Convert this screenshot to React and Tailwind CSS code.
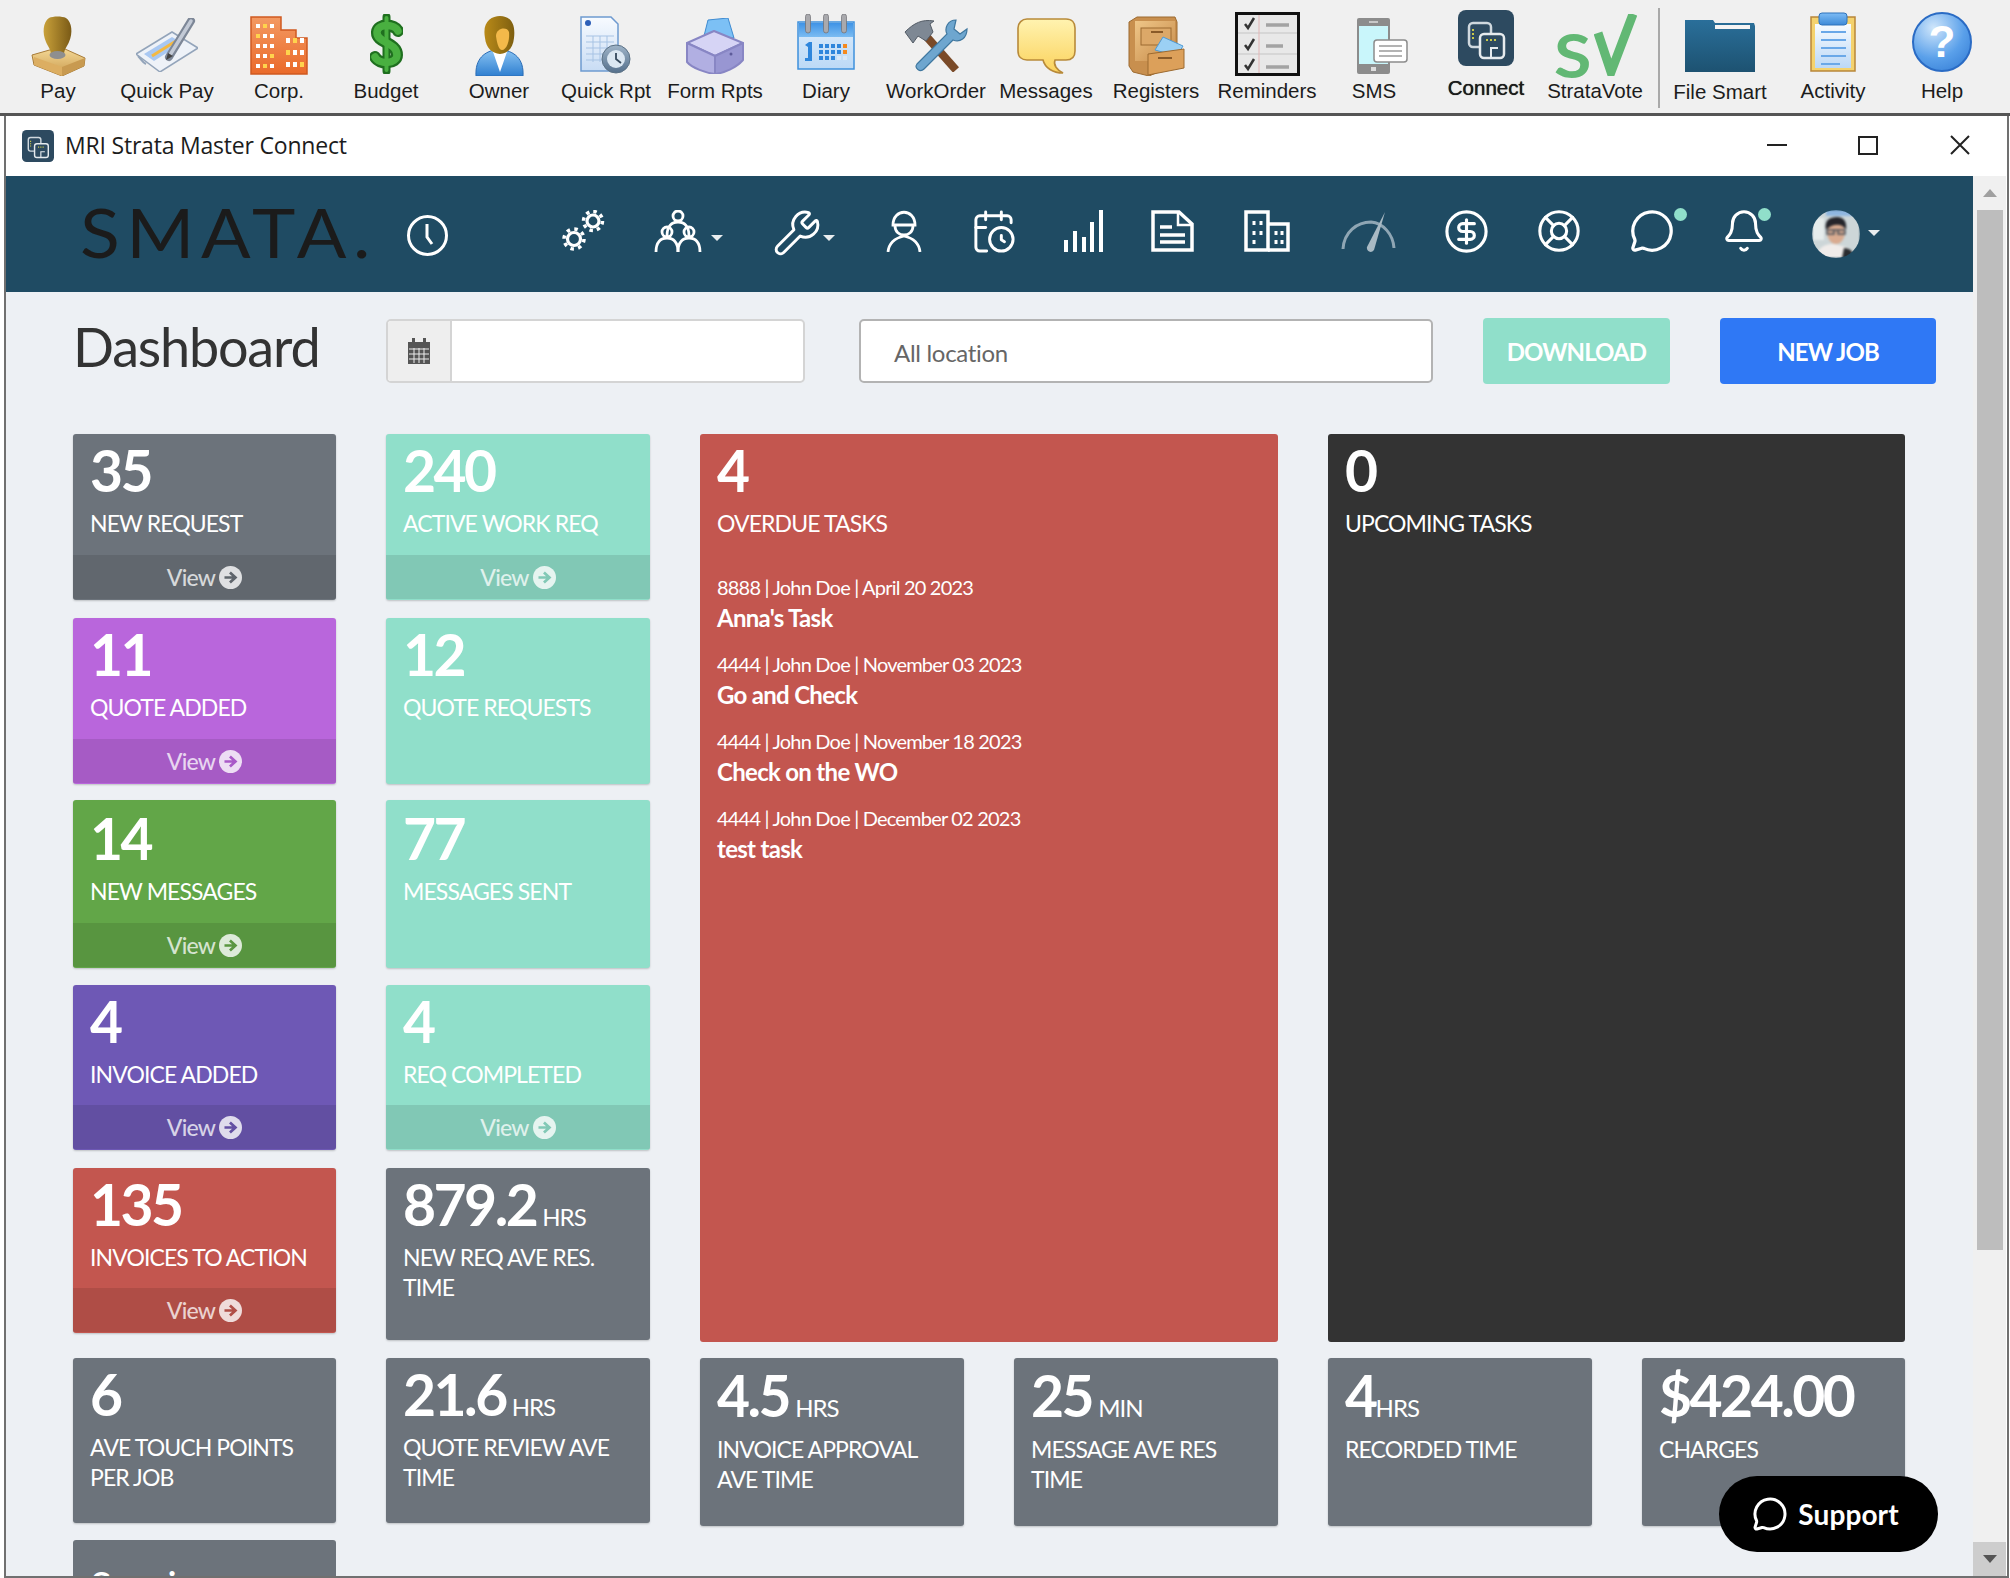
import React from 'react';
import { Wrench, CalendarClock, CircleDollarSign, LifeBuoy, MessageCircle, Bell } from 'lucide-react';

const G = ({ id, a, b, x2 = 0, y2 = 1 }) => (
  <linearGradient id={id} x1="0" y1="0" x2={x2} y2={y2}>
    <stop offset="0" stopColor={a} />
    <stop offset="1" stopColor={b} />
  </linearGradient>
);

const PayIcon = () => (
  <svg width="55" height="60" viewBox="0 0 55 60">
    <defs><G id="p1" a="#c9a13a" b="#7a5a16" x2={1} y2={0} /><G id="p2" a="#f3d795" b="#c99a4c" /></defs>
    <path d="M1 39 L22 33 L34 33 L54 42 L53 50 L31 60 L3 49Z" fill="url(#p2)" stroke="#a87c38" />
    <path d="M3 41 L31 51 L31 60 L3 49Z" fill="#dcae62" />
    <path d="M31 51 L54 42 L53 50 L31 60Z" fill="#c89a50" />
    <path d="M18 2 C12 6 11 17 15 26 C17 31 20 33 20 39 L33 39 C33 33 36 31 38 26 C42 17 41 6 35 2 C31 0 22 0 18 2Z" fill="url(#p1)" />
    <ellipse cx="26.500" cy="39" rx="8" ry="4" fill="#8f8f8f" />
  </svg>
);
const QuickPayIcon = () => (
  <svg width="62" height="54" viewBox="0 0 62 54">
    <path d="M0 36 L36 14 L62 30 L24 54Z" fill="#eef2f8" stroke="#93a4ba" strokeWidth="1.500" />
    <path d="M8 36 L36 19 L46 25 L18 43Z" fill="#a9c8f2" />
    <path d="M16 38 L40 23" stroke="#f4b942" strokeWidth="3" />
    <path d="M2 38 C6 42 6 44 10 46" stroke="#93a4ba" strokeWidth="2" fill="none" />
    <path d="M55 3 L33 39" stroke="#7d8797" strokeWidth="8" strokeLinecap="round" />
    <path d="M55 3 L34 37" stroke="#c3cad6" strokeWidth="3.500" strokeLinecap="round" />
    <path d="M30 42 L32 35 L37 38Z" fill="#444" />
  </svg>
);
const CorpIcon = () => {
  const w = [];
  [8, 18, 28, 38, 48].forEach((y, r) => [6, 13, 20].forEach((x, c) => w.push(<rect key={`a${r}${c}`} x={x} y={y} width="4" height="4" fill={(r + c) % 4 === 1 ? '#ffd34d' : '#fff'} />)));
  [22, 34, 46].forEach((y, r) => [36, 43, 50].forEach((x, c) => w.push(<rect key={`b${r}${c}`} x={x} y={y} width="4" height="5" fill={(r + c) % 3 === 1 ? '#ffd34d' : '#fff'} />)));
  return (
    <svg width="58" height="59" viewBox="0 0 58 59">
      <defs><G id="c1" a="#f39a63" b="#ea6a2a" /></defs>
      <path d="M1 1 H31 V14 H46 V22 H57 V58 H1Z" fill="url(#c1)" stroke="#cf5a20" strokeWidth="1.500" />
      {w}
    </svg>
  );
};
const BudgetIcon = () => {
  const d = 'M28 17 C25 10 8 9 7 18 C6 29 27 28 27 41 C27 50 9 51 5 43';
  return (
    <svg width="33" height="60" viewBox="0 0 33 60">
      <path d="M16.500 3 V57" stroke="#1f6f1f" strokeWidth="8" strokeLinecap="round" />
      <path d={d} fill="none" stroke="#1f6f1f" strokeWidth="12" strokeLinecap="round" />
      <path d="M16.500 4 V56" stroke="#49b040" strokeWidth="4" strokeLinecap="round" />
      <path d={d} fill="none" stroke="#49b040" strokeWidth="7.500" strokeLinecap="round" />
    </svg>
  );
};
const OwnerIcon = () => (
  <svg width="49" height="60" viewBox="0 0 49 60">
    <defs><G id="o1" a="#8cc6f4" b="#2f7fd0" /><G id="o2" a="#b98a18" b="#7e5f10" x2={1} y2={0} /></defs>
    <path d="M1 60 C0 43 9 35 24 33 C40 35 49 43 48 60Z" fill="url(#o1)" stroke="#2a6cb5" />
    <path d="M17 33 L25 56 L33 33Z" fill="#fff" />
    <path d="M10 22 C7 6 16 0 25 0 C34 0 41 6 39 22 C38 32 33 37 25 38 C17 37 11 32 10 22Z" fill="url(#o2)" />
    <path d="M21 20 C21 12 32 10 34 16 C35 26 31 34 27 34 C24 34 22 28 21 20Z" fill="#f3b94a" />
  </svg>
);
const QuickRptIcon = () => (
  <svg width="52" height="58" viewBox="0 0 52 58">
    <defs><G id="q1" a="#f8fbff" b="#c8dcf4" /><G id="q2" a="#9fb4c8" b="#55708c" /></defs>
    <path d="M1 1 H31 L38 8 V55 H1Z" fill="url(#q1)" stroke="#6e9ad0" strokeWidth="1.500" />
    <circle cx="8" cy="7" r="3" fill="#2d5fb8" />
    <path d="M6 20 H34 M6 26 H34 M6 32 H34 M6 38 H34 M6 44 H28 M13 20 V46 M20 20 V46 M27 20 V46" stroke="#a7c3e4" strokeWidth="1" />
    <circle cx="36" cy="43" r="14" fill="url(#q2)" stroke="#5c7286" />
    <circle cx="36" cy="43" r="9" fill="#dbe7f2" />
    <path d="M36 37 V43 L41 47" stroke="#35495c" strokeWidth="1.800" fill="none" />
  </svg>
);
const FormRptsIcon = () => (
  <svg width="62" height="56" viewBox="0 0 62 56" strokeLinejoin="round">
    <path d="M20 18 L24 2 L44 0 L50 20Z" fill="#7cc0f5" stroke="#3f8bd0" />
    <path d="M3 25 L30 13 L59 25 L31 38Z" fill="#d6d4f5" stroke="#8886c4" strokeWidth="2" />
    <path d="M3 25 L31 38 V56 C22 55 8 50 3 44Z" fill="#b1afe2" stroke="#8886c4" strokeWidth="2" />
    <path d="M31 38 L59 25 V42 C52 50 40 55 31 56Z" fill="#9896d2" stroke="#8886c4" strokeWidth="2" />
    <circle cx="47" cy="36" r="1.500" fill="#5d5b9a" />
  </svg>
);
const DiaryIcon = () => (
  <svg width="58" height="56" viewBox="0 0 58 56">
    <defs><G id="d1" a="#dcecfb" b="#bcd9f6" /><G id="d2" a="#3f93e6" b="#7bbcf2" /></defs>
    <rect x="1" y="8" width="56" height="47" fill="url(#d1)" stroke="#3e90dc" strokeWidth="1.500" />
    <rect x="2" y="9" width="54" height="14" fill="url(#d2)" />
    {[11, 29, 47].map((x) => <rect key={x} x={x - 2.500} y="0" width="5" height="19" rx="2.500" fill="#a9a9ad" stroke="#6e6e72" strokeWidth=".700" />)}
    <path d="M8 31 L12 28 H15 V47 H8 V44 H11 V33Z" fill="#2f86dc" />
    {[30, 36, 42].map((y) => [22, 28, 34, 40, 46].map((x) => <rect key={`${x}${y}`} x={x} y={y} width="4" height="4" fill={x === 46 && y < 42 ? '#f58a1f' : y === 42 && x > 34 ? '#d9e8f8' : '#2f86dc'} />))}
  </svg>
);
const WorkOrderIcon = () => (
  <svg width="64" height="54" viewBox="0 0 64 54">
    <path d="M22 18 L52 52" stroke="#7a4a28" strokeWidth="8" />
    <path d="M1 14 C10 5 18 1 30 3 L26 6 L29 14 L22 23 L14 18 L9 25Z" fill="#7e8894" stroke="#545c66" />
    <path d="M52 2 C44 2 40 10 43 16 L13 46 C10 50 16 55 20 51 L49 22 C56 25 63 20 63 11 L56 16 L50 11Z" fill="#6ea6cf" stroke="#3f779f" strokeWidth="1.200" />
  </svg>
);
const MessagesIcon = () => (
  <svg width="59" height="56" viewBox="0 0 59 56">
    <defs><G id="m1" a="#fff3b0" b="#fbd25c" /></defs>
    <path d="M10 1 H49 C55 1 58 5 58 10 V33 C58 40 54 42 49 42 H38 C36 47 40 52 46 55 C36 55 28 50 26 42 H10 C5 42 1 39 1 33 V10 C1 5 5 1 10 1Z" fill="url(#m1)" stroke="#b88a3a" strokeWidth="1.600" />
  </svg>
);
const RegistersIcon = () => (
  <svg width="58" height="60" viewBox="0 0 58 60">
    <defs><G id="r1" a="#efc688" b="#c68a48" x2={1} y2={1} /></defs>
    <path d="M2 6 L10 1 L48 1 L50 6 V48 L22 60 L6 56 L2 50Z" fill="#c88f4e" stroke="#9c6a30" />
    <rect x="8" y="5" width="40" height="40" fill="url(#r1)" />
    <rect x="14" y="12" width="30" height="17" fill="#dca868" stroke="#9c6a30" />
    <path d="M24 16 H36" stroke="#8a5a28" strokeWidth="2" />
    <path d="M28 34 L36 21 L56 30 L50 40Z" fill="#9bd0f4" stroke="#4f9ad4" />
    <path d="M21 38 L57 33 V52 L21 59Z" fill="#dca05a" stroke="#9c6a30" />
    <path d="M31 42 H45" stroke="#8a5a28" strokeWidth="2" />
  </svg>
);
const RemindersIcon = () => (
  <svg width="65" height="64" viewBox="0 0 65 64">
    <rect x="1.500" y="1.500" width="62" height="61" fill="#e8e8e8" stroke="#111" strokeWidth="3" />
    <path d="M3 21 H62 M3 42 H62" stroke="#cfcfcf" strokeWidth="1.500" />
    <path d="M24 3 V61" stroke="#e2b6b6" strokeWidth="1" />
    {[12, 33, 53].map((y) => <path key={y} d={`M10 ${y} L13 ${y + 4} L19 ${y - 6}`} stroke="#333" strokeWidth="2.500" fill="none" />)}
    <path d="M31 13 H54 M31 34 H48 M31 55 H54" stroke="#a3a3a3" strokeWidth="3.500" />
  </svg>
);
const SmsIcon = () => (
  <svg width="51" height="56" viewBox="0 0 51 56">
    <rect x="0" y="0" width="33" height="56" rx="2" fill="#8c8c8c" />
    <rect x="2" y="8" width="29" height="38" fill="#c9f6fb" />
    <path d="M12 4 H21" stroke="#ddd" strokeWidth="1.500" />
    <rect x="14" y="49" width="5" height="4" fill="#ddd" />
    <rect x="17" y="22" width="33" height="22" rx="3" fill="#fff" stroke="#8c8c8c" strokeWidth="1.500" />
    <path d="M22 28 H45 M22 33 H45 M22 38 H45" stroke="#9a9a9a" strokeWidth="1.500" />
  </svg>
);
const ConnectIcon = ({ s = 56 }) => (
  <svg width={s} height={s} viewBox="0 0 56 56">
    <rect width="56" height="56" rx="8" fill="#2d4a60" />
    <rect x="11" y="13" width="22" height="24" rx="4" fill="none" stroke="#cfd8de" strokeWidth="2.500" />
    <rect x="22" y="24" width="24" height="24" rx="4" fill="#2d4a60" stroke="#e6ebee" strokeWidth="2.500" />
    <path d="M15 19 V30" stroke="#c9c84a" strokeWidth="2" strokeDasharray="2 2" />
    <path d="M28 30 H40" stroke="#c9c84a" strokeWidth="2" strokeDasharray="2 2" />
    <path d="M33 48 V38 H40" stroke="#e6ebee" strokeWidth="2" fill="none" />
  </svg>
);
const FolderIcon = () => (
  <svg width="70" height="52" viewBox="0 0 70 52">
    <defs><G id="fo" a="#2a6f9a" b="#1d5271" /></defs>
    <path d="M0 0 H28 L30 3 H69 L70 6 V52 H0Z" fill="url(#fo)" />
    <rect x="30" y="5" width="35" height="4" fill="#f4f4f4" />
  </svg>
);
const ActivityIcon = () => (
  <svg width="46" height="60" viewBox="0 0 46 60">
    <defs><G id="a1" a="#f7fbff" b="#bcd8f6" /><G id="a2" a="#7dbcf5" b="#3d8ad8" /></defs>
    <rect x="1" y="5" width="44" height="54" fill="#f4d26e" stroke="#b8863a" strokeWidth="1.500" />
    <rect x="5" y="12" width="36" height="44" fill="url(#a1)" />
    <rect x="9" y="1" width="28" height="12" rx="3" fill="url(#a2)" stroke="#2f73bb" />
    <path d="M11 20 H36 M11 28 H36 M11 36 H36 M11 44 H36 M11 52 H30" stroke="#6aa8e8" strokeWidth="1.800" />
  </svg>
);

const HelpIcon = () => (
  <div className="w-[60px] h-[60px] rounded-full border-2 border-[#2a6bc4] bg-[radial-gradient(circle_at_35%_25%,#cfe6fb,#5aa0ea_55%,#2f78d2)] flex items-center justify-center text-white font-bold text-[44px] leading-none font-['Liberation_Sans',sans-serif]">?</div>
);

const SvLogo = () => (
  <div className="w-[83px] h-[62px] flex items-end text-[#62b874]">
    <div className="w-[40px] h-[44px] leading-[44px] text-[62px] font-bold font-['Lato',sans-serif] scale-x-[1.1] origin-left overflow-visible">S</div>
    <svg width="43" height="62" viewBox="0 0 43 62" fill="none" stroke="#62b874" strokeWidth="9"><path d="M4 19 L17 58 L39 0" /></svg>
  </div>
);

const tools = [
  { n: 'Pay', w: 'w-[116px]', m: 'mt-[16px]', I: PayIcon },
  { n: 'Quick Pay', w: 'w-[102px]', m: 'mt-[18px]', I: QuickPayIcon },
  { n: 'Corp.', w: 'w-[122px]', m: 'mt-[16px]', I: CorpIcon },
  { n: 'Budget', w: 'w-[92px]', m: 'mt-[14px]', I: BudgetIcon },
  { n: 'Owner', w: 'w-[134px]', m: 'mt-[16px]', I: OwnerIcon },
  { n: 'Quick Rpt', w: 'w-[80px]', m: 'mt-[16px]', I: QuickRptIcon },
  { n: 'Form Rpts', w: 'w-[138px]', m: 'mt-[18px]', I: FormRptsIcon },
  { n: 'Diary', w: 'w-[84px]', m: 'mt-[14px]', I: DiaryIcon },
  { n: 'WorkOrder', w: 'w-[136px]', m: 'mt-[18px]', I: WorkOrderIcon },
  { n: 'Messages', w: 'w-[84px]', m: 'mt-[18px]', I: MessagesIcon },
  { n: 'Registers', w: 'w-[136px]', m: 'mt-[16px]', I: RegistersIcon },
  { n: 'Reminders', w: 'w-[86px]', m: 'mt-[12px]', I: RemindersIcon },
  { n: 'SMS', w: 'w-[128px]', m: 'mt-[18px] ml-[16px]', I: SmsIcon },
  { n: 'Connect', w: 'w-[96px]', m: 'mt-[10px]', I: ConnectIcon, l: '-mt-[3px] [text-shadow:0_0_0.7px_#000]' },
  { n: 'StrataVote', w: 'w-[122px]', m: 'mt-[14px]', I: SvLogo },
];
const tools2 = [
  { n: 'File Smart', w: 'w-[116px]', m: 'mt-[20px]', I: FolderIcon, l: 'mt-[1px]' },
  { n: 'Activity', w: 'w-[110px]', m: 'mt-[12px]', I: ActivityIcon },
  { n: 'Help', w: 'w-[108px]', m: 'mt-[12px]', I: HelpIcon },
];

const ToolItem = ({ t }) => (
  <div className={`${t.w} shrink-0 flex flex-col items-center`}>
    <div className="h-[78px] flex justify-center items-start">
      <div className={t.m}><t.I /></div>
    </div>
    <div className={`h-[26px] leading-[26px] text-[20.5px] text-[#1c1c1c] whitespace-nowrap font-['Liberation_Sans',sans-serif] ${t.l || ''}`}>{t.n}</div>
  </div>
);

const Caret = ({ c = '' }) => (
  <div className={`w-0 h-0 border-x-[6px] border-x-transparent border-t-[6px] border-t-white/90 ${c}`} />
);

const Gears = () => (
  <svg width="43" height="42" viewBox="0 0 43 42" fill="none" stroke="#fff">
    <circle cx="12" cy="29" r="6.500" strokeWidth="3.200" />
    <circle cx="12" cy="29" r="10" strokeWidth="3.500" strokeDasharray="3.500 4.350" />
    <circle cx="31" cy="11" r="6" strokeWidth="3.200" />
    <circle cx="31" cy="11" r="9.500" strokeWidth="3.500" strokeDasharray="3.500 3.960" />
  </svg>
);
const People = () => {
  const P = ({ x, y }) => (
    <g>
      <circle cx={x} cy={y} r="5" />
      <path d={`M${x - 11} ${y + 20} C${x - 11} ${y + 10} ${x - 6} ${y + 6} ${x} ${y + 6} C${x + 6} ${y + 6} ${x + 11} ${y + 10} ${x + 11} ${y + 20}`} />
    </g>
  );
  return (
    <svg width="48" height="42" viewBox="0 0 48 42" fill="none" stroke="#fff" strokeWidth="2.800">
      <P x={24} y={6} />
      <P x={13} y={22} />
      <P x={35} y={22} />
    </svg>
  );
};
const Worker = () => (
  <svg width="36" height="42" viewBox="0 0 36 42" fill="none" stroke="#fff" strokeWidth="2.800">
    <path d="M7 15 C7 -2 29 -2 29 15 Z" />
    <path d="M9 16 C9 28 27 28 27 16" />
    <path d="M2 42 C3 32 9 28 18 26 C27 28 33 32 34 42" />
  </svg>
);
const Bars = () => (
  <svg width="39" height="42" viewBox="0 0 39 42" fill="#fff">
    <rect x="0" y="30" width="4" height="12" />
    <rect x="9" y="21" width="4" height="21" />
    <rect x="18" y="27" width="4" height="15" />
    <rect x="26" y="12" width="4" height="30" />
    <rect x="35" y="0" width="4" height="42" />
  </svg>
);
const Doc = () => (
  <svg width="43" height="42" viewBox="0 0 43 42" fill="none" stroke="#fff" strokeWidth="3.500">
    <path d="M2 2 H28 L41 14 V40 H2Z" />
    <path d="M27 3 V15 H40" strokeWidth="2.500" />
    <path d="M9 17 H21 M9 25 H34 M9 32 H34" strokeWidth="3.500" />
  </svg>
);
const Buildings = () => (
  <svg width="46" height="42" viewBox="0 0 46 42" fill="none" stroke="#fff" strokeWidth="3.500">
    <path d="M2 2 H24 V40 H2Z" />
    <path d="M24 14 H44 V40 H24" />
    <path d="M10 11 V15 M17 11 V15 M10 21 V25 M17 21 V25 M10 30 V34 M32 21 V25 M38 21 V25 M32 30 V34 M38 30 V34" strokeWidth="3" />
  </svg>
);
const Gauge = () => (
  <svg width="55" height="40" viewBox="0 0 55 40" fill="none">
    <path d="M2 37 C3 20 16 10 30 10 C42 11 52 22 53 36" stroke="#8fa6b4" strokeWidth="3" />
    <path d="M44 0 L33 38 C30 42 25 39 26 35Z" fill="#a9bac4" />
  </svg>
);
const Avatar = () => (
  <div className="w-[48px] h-[48px] rounded-full overflow-hidden">
    <svg width="48" height="48" viewBox="0 0 48 48" className="blur-[0.8px]">
      <rect width="48" height="48" fill="#cdd6d8" />
      <rect x="14" width="26" height="6" fill="#8fb6e0" />
      <rect x="0" y="8" width="12" height="22" fill="#e6ecec" />
      <path d="M4 48 C6 36 14 34 22 34 L30 36 C38 38 42 42 42 48Z" fill="#f0ecea" />
      <path d="M32 38 C38 38 42 42 42 48 H30Z" fill="#2a2c30" />
      <ellipse cx="24" cy="22" rx="9" ry="12" fill="#d9ab90" />
      <path d="M14 20 C12 10 18 7 25 7 C32 7 35 12 34 20 C31 13 20 13 14 20Z" fill="#25252b" />
      <path d="M15 20 H33 M15 20 V24 H22 V20 M26 20 V24 H33 V20" stroke="#4a5058" strokeWidth="1.500" fill="none" />
    </svg>
  </div>
);
const Dot = ({ c }) => <div className={`absolute w-[13px] h-[13px] rounded-full bg-[#90dfca] ${c}`} />;

const ViewBand = ({ s }) => (
  <div className="h-[44px] mt-auto mb-[1px] bg-black/10 flex items-center justify-center gap-[4px] text-white/75 text-[23px] tracking-[-0.8px] font-medium">
    View
    <svg width="23" height="23" viewBox="0 0 21 21" className="mt-[1px]">
      <circle cx="10.500" cy="10.500" r="10.500" fill="#fff" fillOpacity=".8" />
      <path d="M5 10.500 H14 M10 6 L15 10.500 L10 15" fill="none" className={s} strokeWidth="2.500" />
    </svg>
  </div>
);

const Card = ({ bg, num, unit, label, view, s, h, m = '', pt = 'pt-[8px]', lm = 'mt-[9px]' }) => (
  <div className={`${bg} ${h} ${m} rounded-[3px] overflow-hidden flex flex-col text-white shadow-[0_1px_2px_rgba(0,0,0,0.2)]`}>
    <div className={`px-[17px] ${pt}`}>
      <div className="h-[57px] leading-[57px] text-[57px] font-bold tracking-[-2.5px] whitespace-nowrap">
        {num}
        {unit && <span className={`text-[24px] font-normal tracking-[-1px] ${unit === 'HRS4' ? '' : 'ml-[6px]'}`}>{unit === 'HRS4' ? 'HRS' : unit}</span>}
      </div>
      <div className={`${lm} leading-[30px] text-[23px] font-normal tracking-[-0.9px]`}>{label}</div>
    </div>
    {view && <ViewBand s={s} />}
  </div>
);

const tasks = [
  ['8888 | John Doe | April 20 2023', "Anna's Task"],
  ['4444 | John Doe | November 03 2023', 'Go and Check'],
  ['4444 | John Doe | November 18 2023', 'Check on the WO'],
  ['4444 | John Doe | December 02 2023', 'test task'],
];

export default function App() {
  return (
    <div className="w-[2010px] h-[1578px] overflow-hidden bg-white flex flex-col font-['Lato',sans-serif]">
      <div className="h-[116px] shrink-0 bg-[#f0f0f0] border-b-[3px] border-b-[#555] flex">
        {tools.map((t) => <ToolItem key={t.n} t={t} />)}
        <div className="w-[2px] h-[100px] mt-[8px] bg-[#a9a9a9] ml-[2px] mr-[2px]" />
        {tools2.map((t) => <ToolItem key={t.n} t={t} />)}
      </div>

      <div className="relative flex-1 min-h-0 ml-[4px] mr-[1px] border-x-[2px] border-b-[2px] border-x-[#707070] border-b-[#707070] flex flex-col overflow-hidden">
        <div className="h-[60px] shrink-0 bg-white flex items-center pl-[16px] pr-[37px]">
          <ConnectIcon s={32} />
          <div className="ml-[11px] mb-[2px] text-[23px] text-[#1c1c1c] font-['Open_Sans',sans-serif] tracking-[-0.2px]">MRI Strata Master Connect</div>
          <div className="ml-auto mb-[2px] flex items-center">
            <div className="w-[20px] h-[2px] bg-[#222]" />
            <div className="ml-[71px] w-[20px] h-[19px] border-[2px] border-[#222]" />
            <svg width="20" height="20" viewBox="0 0 20 20" className="ml-[72px]"><path d="M1 1 L19 19 M19 1 L1 19" stroke="#222" strokeWidth="2" /></svg>
          </div>
        </div>

        <div className="flex-1 min-h-0 flex">
          <div className="w-[1967px] shrink-0 bg-[#edf0f4] flex flex-col overflow-hidden">
            <div className="h-[116px] shrink-0 bg-[#1f4b63] flex items-start pl-[74px] pt-[34px]">
              <div className="w-[327px] shrink-0 text-[#1b1b1b] text-[68px] leading-[64px] -mt-[10px] tracking-[6px] font-normal scale-x-[1.08] origin-left">SMATA.</div>
              <svg width="41" height="41" viewBox="0 0 41 41" fill="none" stroke="#fff" strokeWidth="3" className="mt-[5px] shrink-0"><circle cx="20.500" cy="20.500" r="19" /><path d="M20 9 V22 L25 29" /></svg>
              <div className="ml-[114px]"><Gears /></div>
              <div className="ml-[49px]"><People /></div>
              <Caret c="ml-[9px] mt-[25px]" />
              <div className="ml-[49px] -mt-[2px]"><Wrench size={50} color="#fff" strokeWidth={1.4} /></div>
              <Caret c="ml-[1px] mt-[25px]" />
              <div className="ml-[51px]"><Worker /></div>
              <div className="ml-[48px] -mt-[2px]"><CalendarClock size={47} color="#fff" strokeWidth={1.5} /></div>
              <div className="ml-[47px]"><Bars /></div>
              <div className="ml-[48px]"><Doc /></div>
              <div className="ml-[50px]"><Buildings /></div>
              <div className="ml-[51px] mt-[2px]"><Gauge /></div>
              <div className="ml-[47px] -mt-[2px]"><CircleDollarSign size={47} color="#fff" strokeWidth={1.6} /></div>
              <div className="ml-[46px] -mt-[2px]"><LifeBuoy size={46} color="#fff" strokeWidth={1.6} /></div>
              <div className="ml-[47px] -mt-[2px] relative"><MessageCircle size={46} color="#fff" strokeWidth={1.7} /><Dot c="left-[45px] top-0" /></div>
              <div className="ml-[46px] -mt-[2px] relative"><Bell size={46} color="#fff" strokeWidth={1.6} /><Dot c="left-[37px] top-0" /></div>
              <div className="ml-[45px]"><Avatar /></div>
              <Caret c="ml-[8px] mt-[20px]" />
            </div>

            <div className="mt-[27px] h-[64px] shrink-0 flex items-center pl-[67px]">
              <div className="w-[313px] shrink-0 mb-[8px] text-[54px] leading-[64px] text-[#333] tracking-[-1.2px] font-normal">Dashboard</div>
              <div className="w-[419px] h-[64px] shrink-0 flex rounded-[5px] border-[2px] border-[#d4d4d4] bg-white overflow-hidden">
                <div className="w-[64px] bg-[#eeeeee] border-r-[2px] border-r-[#d4d4d4] flex items-center justify-center">
                  <svg width="24" height="26" viewBox="0 0 24 26" fill="#555">
                    <rect x="5" y="0" width="3" height="6" /><rect x="16" y="0" width="3" height="6" />
                    <path d="M1 4 H23 V26 H1Z" />
                    <path d="M2 11 H22 M2 16 H22 M2 21 H22 M7 10 V25 M12 10 V25 M17 10 V25" stroke="#eee" strokeWidth="1" />
                  </svg>
                </div>
              </div>
              <div className="ml-[54px] w-[574px] h-[64px] shrink-0 rounded-[5px] border-[2px] border-[#b3b3b3] bg-white flex items-center pl-[33px] pt-[3px] text-[24px] text-[#666] tracking-[-0.3px]">All location</div>
              <div className="ml-[50px] w-[187px] h-[66px] shrink-0 rounded-[4px] bg-[#90dfca] flex items-center justify-center pt-[1px] text-white text-[24px] font-bold tracking-[-0.9px]">DOWNLOAD</div>
              <div className="ml-[50px] w-[216px] h-[66px] shrink-0 rounded-[4px] bg-[#2f78f5] flex items-center justify-center pt-[1px] text-white text-[24px] font-bold tracking-[-0.9px]">NEW JOB</div>
            </div>

            <div className="mt-[51px] pl-[67px] grid grid-cols-[263px_264px_578px_577px] gap-x-[50px] h-[908px] shrink-0">
              <div className="flex flex-col">
                <Card bg="bg-[#6c737b]" num="35" label="NEW REQUEST" view s="stroke-[#5f656c]" h="h-[166px]" />
                <Card bg="bg-[#b966dc]" num="11" label="QUOTE ADDED" view s="stroke-[#a95ac8]" h="h-[166px]" m="mt-[18px]" />
                <Card bg="bg-[#62a648]" num="14" label="NEW MESSAGES" view s="stroke-[#5a9640]" h="h-[168px]" m="mt-[16px]" pt="pt-[10px]" />
                <Card bg="bg-[#6e58b5]" num="4" label="INVOICE ADDED" view s="stroke-[#6350a3]" h="h-[165px]" m="mt-[17px]" />
                <Card bg="bg-[#c3564f]" num="135" label="INVOICES TO ACTION" view s="stroke-[#b04e47]" h="h-[165px]" m="mt-[18px]" />
              </div>
              <div className="flex flex-col">
                <Card bg="bg-[#90dfca]" num="240" label="ACTIVE WORK REQ" view s="stroke-[#82c9b6]" h="h-[166px]" />
                <Card bg="bg-[#90dfca]" num="12" label="QUOTE REQUESTS" h="h-[166px]" m="mt-[18px]" />
                <Card bg="bg-[#90dfca]" num="77" label="MESSAGES SENT" h="h-[168px]" m="mt-[16px]" pt="pt-[10px]" />
                <Card bg="bg-[#90dfca]" num="4" label="REQ COMPLETED" view s="stroke-[#82c9b6]" h="h-[165px]" m="mt-[17px]" />
                <Card bg="bg-[#6c737b]" num="879.2" unit="HRS" label="NEW REQ AVE RES. TIME" h="h-[172px]" m="mt-[18px]" />
              </div>
              <div className="bg-[#c3564f] rounded-[3px] text-white flex flex-col">
                <div className="px-[17px] pt-[8px]">
                  <div className="h-[57px] leading-[57px] text-[57px] font-bold">4</div>
                  <div className="mt-[9px] leading-[30px] text-[23px] tracking-[-0.9px]">OVERDUE TASKS</div>
                  <div className="mt-[34px] flex flex-col gap-[15px]">
                    {tasks.map(([a, b]) => (
                      <div key={a}>
                        <div className="leading-[30px] text-[20px] tracking-[-0.8px]">{a}</div>
                        <div className="leading-[32px] text-[24px] font-bold tracking-[-0.7px]">{b}</div>
                      </div>
                    ))}
                  </div>
                </div>
              </div>
              <div className="bg-[#333333] rounded-[3px] text-white">
                <div className="px-[17px] pt-[8px]">
                  <div className="h-[57px] leading-[57px] text-[57px] font-bold">0</div>
                  <div className="mt-[9px] leading-[30px] text-[23px] tracking-[-0.9px]">UPCOMING TASKS</div>
                </div>
              </div>
            </div>

            <div className="mt-[16px] pl-[67px] grid grid-cols-[263px_264px_264px_264px_264px_263px] gap-x-[50px] shrink-0 items-start">
              <Card bg="bg-[#6c737b]" num="6" label="AVE TOUCH POINTS PER JOB" h="h-[165px]" />
              <Card bg="bg-[#6c737b]" num="21.6" unit="HRS" label="QUOTE REVIEW AVE TIME" h="h-[165px]" />
              <Card bg="bg-[#6c737b]" num="4.5" unit="HRS" label="INVOICE APPROVAL AVE TIME" h="h-[168px]" pt="pt-[9px]" lm="mt-[10px]" />
              <Card bg="bg-[#6c737b]" num="25" unit="MIN" label="MESSAGE AVE RES TIME" h="h-[168px]" pt="pt-[9px]" lm="mt-[10px]" />
              <Card bg="bg-[#6c737b]" num="4" unit="HRS4" label="RECORDED TIME" h="h-[168px]" pt="pt-[9px]" lm="mt-[10px]" />
              <Card bg="bg-[#6c737b]" num="$424.00" label="CHARGES" h="h-[168px]" pt="pt-[9px]" lm="mt-[10px]" />
            </div>

            <div className="mt-[14px] ml-[67px] w-[263px] h-[120px] shrink-0 bg-[#6c737b] rounded-[3px] text-white px-[17px] pt-[21px] text-[40px] leading-[50px] font-normal">Sessions</div>
          </div>

          <div className="w-[33px] shrink-0 bg-[#f0f0f0] flex flex-col items-center">
            <div className="h-[34px] shrink-0 flex items-center justify-center">
              <div className="w-0 h-0 border-x-[7px] border-x-transparent border-b-[8px] border-b-[#a0a0a0]" />
            </div>
            <div className="w-[26px] h-[1040px] shrink-0 bg-[#bdbdbd]" />
            <div className="mt-auto w-full h-[34px] bg-[#cdcdcd] flex items-center justify-center">
              <div className="w-0 h-0 border-x-[7px] border-x-transparent border-t-[8px] border-t-[#555]" />
            </div>
          </div>
        </div>

        <div className="absolute left-[1713px] top-[1360px] w-[219px] h-[76px] rounded-[38px] bg-black flex items-center justify-center gap-[10px] text-white text-[28px] font-bold tracking-[0.1px]">
          <MessageCircle size={36} color="#fff" strokeWidth={2} className="-ml-[6px]" />
          Support
        </div>
      </div>
    </div>
  );
}
